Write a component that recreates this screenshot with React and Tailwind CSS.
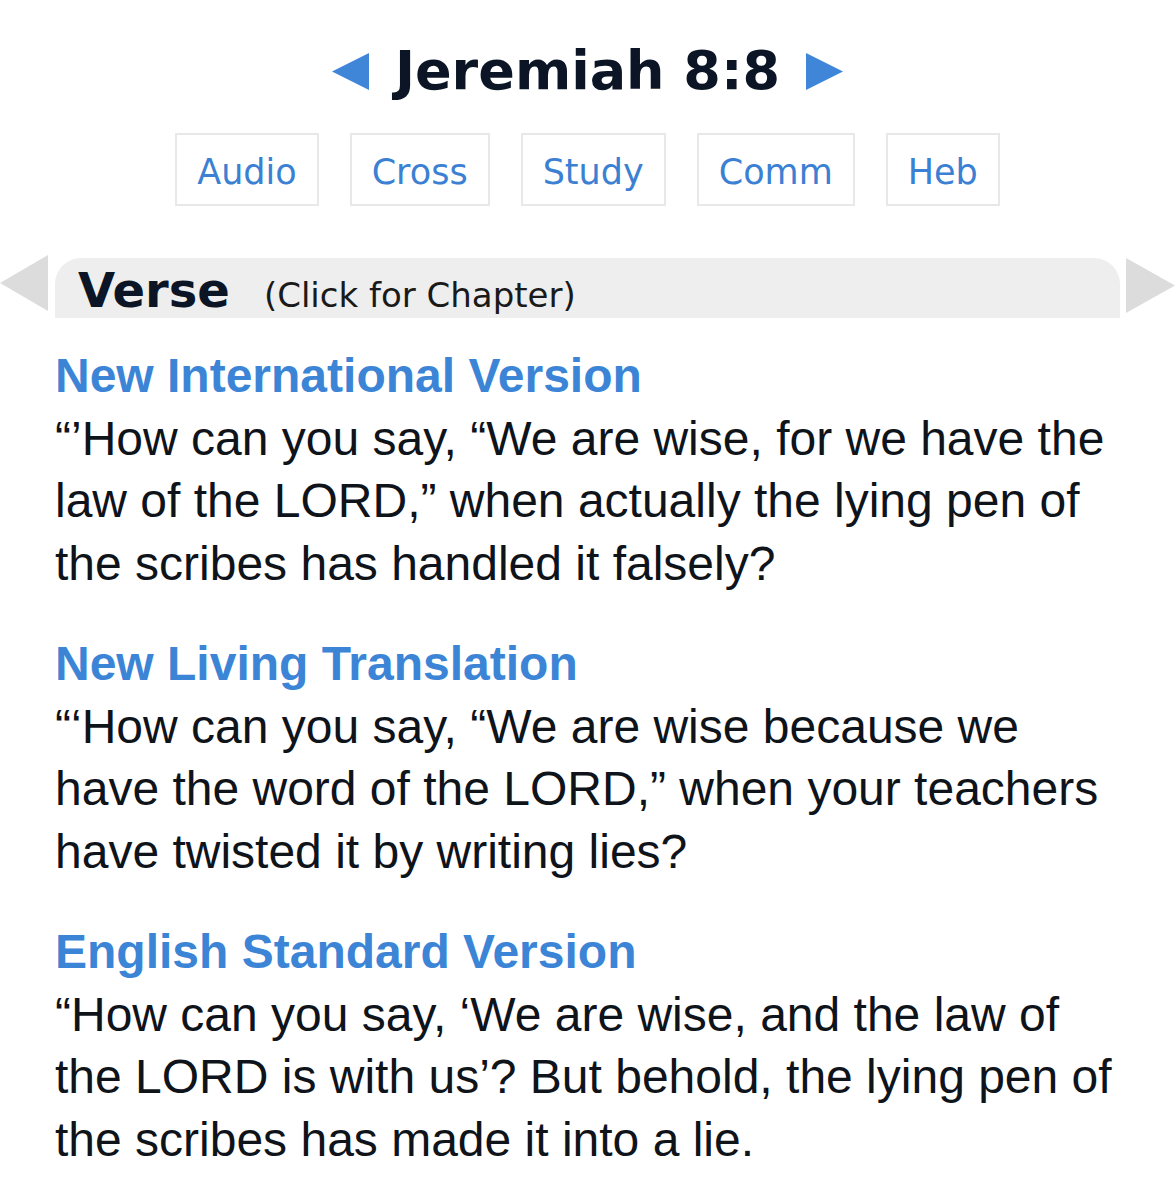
import React from "react";

const sections = [
  {
    title: "New International Version",
    text: "\u201C\u2019How can you say, \u201CWe are wise, for we have the law of the LORD,\u201D when actually the lying pen of the scribes has handled it falsely?",
  },
  {
    title: "New Living Translation",
    text: "\u201C\u2018How can you say, \u201CWe are wise because we have the word of the LORD,\u201D when your teachers have twisted it by writing lies?",
  },
  {
    title: "English Standard Version",
    text: "\u201CHow can you say, \u2018We are wise, and the law of the LORD is with us\u2019? But behold, the lying pen of the scribes has made it into a lie.",
  },
];

const buttons = ["Audio", "Cross", "Study", "Comm", "Heb"];

export default function App() {
  return (
    <div className="w-[1175px] h-[1200px] bg-white overflow-hidden">
      {/* Title */}
      <div className="pt-[40px] flex items-center justify-center gap-[26px]">
        <svg width="37" height="37" viewBox="0 0 37 37">
          <polygon points="37,0 37,37 0,18.5" fill="#3f86d9" />
        </svg>
        <h1
          className="text-[54px] leading-[62px] font-bold text-[#0b1526]"
          style={{ fontFamily: '"DejaVu Sans", Verdana, sans-serif' }}
        >
          Jeremiah 8:8
        </h1>
        <svg width="37" height="37" viewBox="0 0 37 37">
          <polygon points="0,0 0,37 37,18.5" fill="#3f86d9" />
        </svg>
      </div>

      {/* Buttons */}
      <div
        className="mt-[31px] flex justify-center gap-[31px]"
        style={{ fontFamily: '"DejaVu Sans", Verdana, sans-serif' }}
      >
        {buttons.map((b) => (
          <div
            key={b}
            className="h-[73px] px-[20px] pt-[5px] border-2 border-[#e8e8e8] flex items-center text-[35px] leading-none text-[#3b80d2]"
          >
            {b}
          </div>
        ))}
      </div>

      {/* Verse bar */}
      <div className="mt-[52px] flex items-start">
        <svg width="48" height="56" viewBox="0 0 48 56" className="mt-[-3px] shrink-0">
          <polygon points="48,0 48,56 0,28" fill="#dcdcdc" />
        </svg>
        <div
          className="ml-[7px] flex-1 h-[60px] bg-[#eeeeee] rounded-t-[26px] pl-[23px] pt-[9px] flex items-baseline"
          style={{ fontFamily: '"DejaVu Sans", Verdana, sans-serif' }}
        >
          <span className="text-[48px] leading-[46px] font-bold text-[#0b1526]">Verse</span>
          <span className="ml-[34px] text-[34px] leading-[46px] text-[#1a1a1a]">(Click for Chapter)</span>
        </div>
        <svg width="49" height="55" viewBox="0 0 49 55" className="ml-[6px] shrink-0">
          <polygon points="0,0 0,55 49,27.5" fill="#dcdcdc" />
        </svg>
      </div>

      {/* Versions */}
      <div
        className="mt-[27px] pl-[55px] w-[1120px]"
        style={{ fontFamily: '"Liberation Sans", Arial, Helvetica, sans-serif' }}
      >
        {sections.map((s, i) => (
          <div key={s.title} className={i > 0 ? "mt-[38px]" : ""}>
            <h2 className="text-[48px] leading-[62.5px] font-bold text-[#3c85d6]">{s.title}</h2>
            <p className="text-[48px] leading-[62.5px] text-[#0f131a]">{s.text}</p>
          </div>
        ))}
      </div>
    </div>
  );
}
